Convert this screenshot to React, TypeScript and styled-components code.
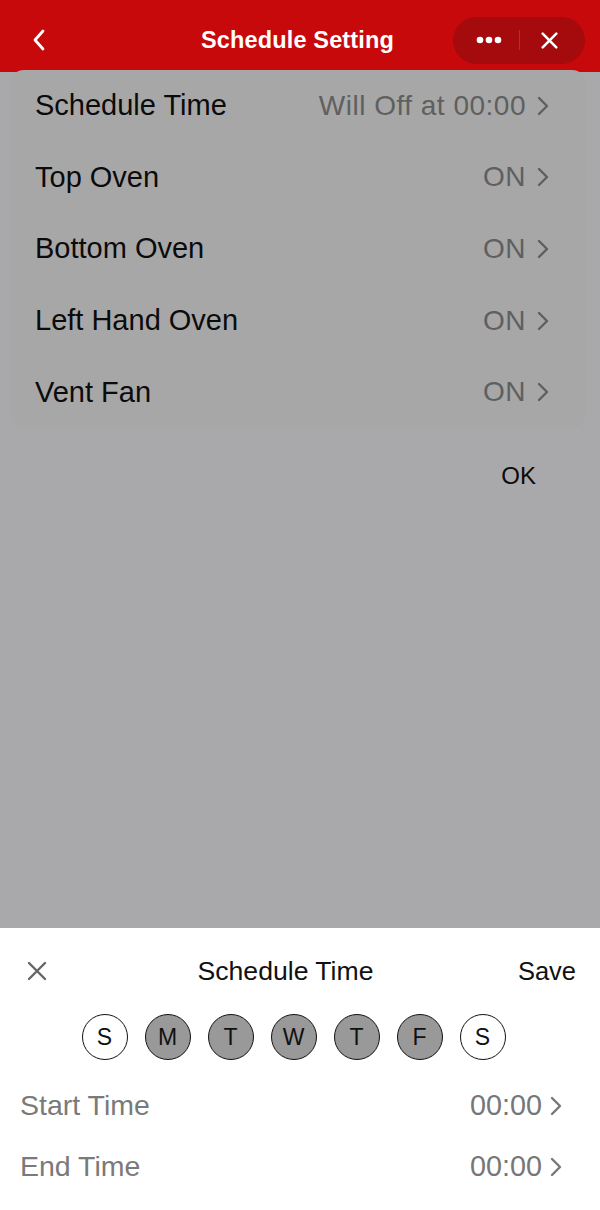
import React from 'react'
import styled, { createGlobalStyle } from 'styled-components'

// ______________________________________________________
//
const GlobalStyle = createGlobalStyle`
  html, body {
    margin: 0;
    padding: 0;
    background: #a9a9ab;
  }
  * {
    box-sizing: border-box;
  }
`

const font = `"Liberation Sans", Arial, Helvetica, sans-serif`

type Setting = { label: string; value: string }

const settings: Setting[] = [
  { label: 'Schedule Time', value: 'Will Off at 00:00' },
  { label: 'Top Oven', value: 'ON' },
  { label: 'Bottom Oven', value: 'ON' },
  { label: 'Left Hand Oven', value: 'ON' },
  { label: 'Vent Fan', value: 'ON' },
]

const days = [
  { letter: 'S', on: false },
  { letter: 'M', on: true },
  { letter: 'T', on: true },
  { letter: 'W', on: true },
  { letter: 'T', on: true },
  { letter: 'F', on: true },
  { letter: 'S', on: false },
]

// ______________________________________________________
//
const Screen = styled.div`
  width: 600px;
  height: 1210px;
  display: flex;
  flex-direction: column;
  background: #a9a9ab;
  font-family: ${font};
  overflow: hidden;
`

const Header = styled.header`
  height: 72px;
  flex: none;
  display: grid;
  grid-template-columns: 1fr auto 1fr;
  align-items: center;
  padding: 8px 15px 0 32px;
  background: #c8090c;
  color: #fff;
`

const Title = styled.h1`
  margin: 0 22px 0 0;
  font-size: 23.5px;
  font-weight: 700;
  letter-spacing: 0.15px;
`

const Capsule = styled.div`
  justify-self: end;
  width: 132px;
  height: 47px;
  border-radius: 24px;
  background: #a50a0c;
  display: grid;
  grid-template-columns: 1fr 1px 1fr;
  align-items: center;
  justify-items: center;
  padding: 0 6px;
`

const Separator = styled.span`
  width: 1px;
  height: 20px;
  background: rgba(255, 255, 255, 0.15);
`

const Card = styled.section`
  margin: -2px 14px 0 10px;
  padding: 0 0 0 25px;
  border-radius: 14px;
  background: #a7a7a8;
`

const Row = styled.div`
  height: 71.6px;
  display: flex;
  align-items: center;
  justify-content: space-between;
  padding-right: 37px;
`

const Label = styled.span`
  font-size: 29px;
  color: #0b0b0b;
`

const Value = styled.span`
  display: flex;
  align-items: center;
  gap: 11px;
  font-size: 28px;
  letter-spacing: 0.5px;
  color: #5f5f5f;
`

const OkBar = styled.div`
  display: flex;
  justify-content: flex-end;
  padding: 34px 64px 0 0;
`

const OkButton = styled.span`
  font-size: 24px;
  color: #0b0b0b;
`

const Sheet = styled.section`
  margin-top: auto;
  height: 282px;
  background: #fff;
  padding: 0 24px 0 20px;
`

const SheetHead = styled.div`
  height: 86px;
  display: grid;
  grid-template-columns: 1fr auto 1fr;
  align-items: center;
  padding: 0 0 0 7px;
`

const SheetTitle = styled.span`
  font-size: 26.6px;
  color: #111;
  margin-right: 32px;
`

const Save = styled.span`
  justify-self: end;
  font-size: 25.5px;
  color: #111;
`

const Days = styled.div`
  display: flex;
  justify-content: center;
  gap: 17px;
  padding-right: 9px;
`

const Day = styled.span<{ $on: boolean }>`
  width: 46px;
  height: 46px;
  border-radius: 50%;
  border: 1.5px solid #111;
  background: ${p => (p.$on ? '#999999' : '#ffffff')};
  display: flex;
  align-items: center;
  justify-content: center;
  font-size: 23px;
  color: #111;
`

const TimeList = styled.div`
  padding-top: 15px;
`

const TimeRow = styled.div`
  height: 61px;
  display: flex;
  align-items: center;
  justify-content: space-between;
  padding-right: 14px;
`

const TimeLabel = styled.span`
  font-size: 28.5px;
  color: #7a7a7a;
`

const TimeValue = styled.span`
  display: flex;
  align-items: center;
  gap: 8px;
  font-size: 28.8px;
  color: #777;
`

// ______________________________________________________
//
const Chevron: React.FC<{ color: string; size?: number }> = ({ color, size = 20 }) => (
  <svg width={size * 0.6} height={size} viewBox="0 0 12 20" fill="none">
    <path d="M2 2l8 8-8 8" stroke={color} strokeWidth="2.4" strokeLinecap="round" strokeLinejoin="round" />
  </svg>
)

const BackIcon = () => (
  <svg width="14" height="22" viewBox="0 0 14 22" fill="none">
    <path d="M11 2L3 11l8 9" stroke="#fff" strokeWidth="2.8" strokeLinecap="round" strokeLinejoin="round" />
  </svg>
)

const DotsIcon = () => (
  <svg width="26" height="8" viewBox="0 0 26 8">
    <circle cx="4" cy="4" r="3.3" fill="#fff" />
    <circle cx="13" cy="4" r="3.3" fill="#fff" />
    <circle cx="22" cy="4" r="3.3" fill="#fff" />
  </svg>
)

const CloseIcon: React.FC<{ color: string; size: number; width: number }> = ({ color, size, width }) => (
  <svg width={size} height={size} viewBox="0 0 20 20" fill="none">
    <path d="M2 2l16 16M18 2L2 18" stroke={color} strokeWidth={width} strokeLinecap="round" />
  </svg>
)

// ______________________________________________________
//
const App: React.FC = () => (
  <>
    <GlobalStyle />
    <Screen>
      <Header>
        <BackIcon />
        <Title>Schedule Setting</Title>
        <Capsule>
          <DotsIcon />
          <Separator />
          <CloseIcon color="#fff" size={17} width={3} />
        </Capsule>
      </Header>
      <Card>
        {settings.map(s => (
          <Row key={s.label}>
            <Label>{s.label}</Label>
            <Value>
              {s.value}
              <Chevron color="#5f5f5f" />
            </Value>
          </Row>
        ))}
      </Card>
      <OkBar>
        <OkButton>OK</OkButton>
      </OkBar>
      <Sheet>
        <SheetHead>
          <CloseIcon color="#666" size={20} width={2.4} />
          <SheetTitle>Schedule Time</SheetTitle>
          <Save>Save</Save>
        </SheetHead>
        <Days>
          {days.map((d, i) => (
            <Day key={i} $on={d.on}>
              {d.letter}
            </Day>
          ))}
        </Days>
        <TimeList>
          <TimeRow>
            <TimeLabel>Start Time</TimeLabel>
            <TimeValue>
              00:00
              <Chevron color="#777" />
            </TimeValue>
          </TimeRow>
          <TimeRow>
            <TimeLabel>End Time</TimeLabel>
            <TimeValue>
              00:00
              <Chevron color="#777" />
            </TimeValue>
          </TimeRow>
        </TimeList>
      </Sheet>
    </Screen>
  </>
)

export default App
